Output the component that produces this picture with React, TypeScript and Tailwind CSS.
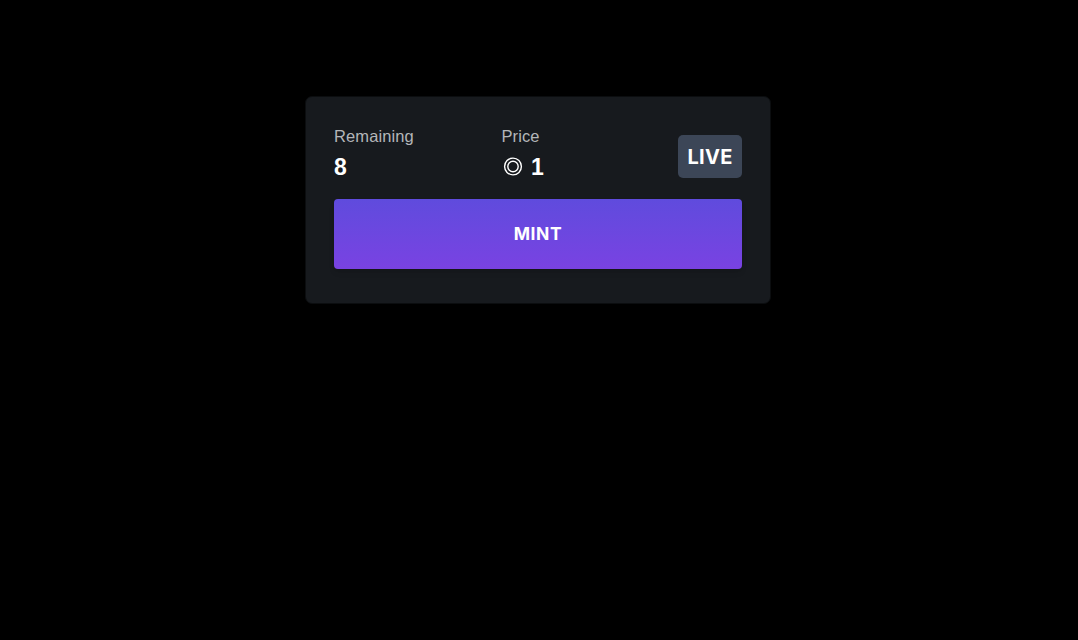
import type { ReactNode } from "react"

type StatProps = { label: string; children: ReactNode }

function Stat({ label, children }: StatProps) {
  return (
    <div className="w-[167.5px]">
      <p className="text-[16.5px] leading-6 tracking-[0.1px] text-[#b4b6b9]">{label}</p>
      <div className="mt-[3px] flex h-8 items-center text-[23px] font-bold text-white">{children}</div>
    </div>
  )
}

function PriceIcon() {
  return (
    <svg viewBox="0 0 20 20" className="ml-[1.5px] mr-[8px] size-5" fill="none" stroke="white" strokeWidth="1.4">
      <circle cx="10" cy="9.5" r="8.4" />
      <circle cx="10" cy="9.5" r="5.2" />
    </svg>
  )
}

export default function App() {
  return (
    <main className="flex min-h-screen justify-center bg-black pt-[96px] pr-[2px] font-['Liberation_Sans',Arial,sans-serif]">
      <section className="h-[208px] w-[466px] rounded-[7px] border border-[#0b0d0f] bg-[#171a1e] px-7 pt-[27px]">
        <div className="flex">
          <Stat label="Remaining">8</Stat>
          <Stat label="Price">
            <PriceIcon />1
          </Stat>
          <div className="ml-auto mt-[11px] flex h-[43px] w-16 items-center justify-center rounded-[5px] bg-[#3c4657] pt-px font-[Inter,sans-serif] text-[20px] font-bold tracking-[0.3px] text-white">
            LIVE
          </div>
        </div>
        <button className="mt-[16px] h-[70px] w-full rounded bg-linear-to-b from-[#5f4bdd] to-[#7942e2] font-[Inter,sans-serif] text-[17.5px] font-bold tracking-[0.6px] text-white shadow-md">
          MINT
        </button>
      </section>
    </main>
  )
}
